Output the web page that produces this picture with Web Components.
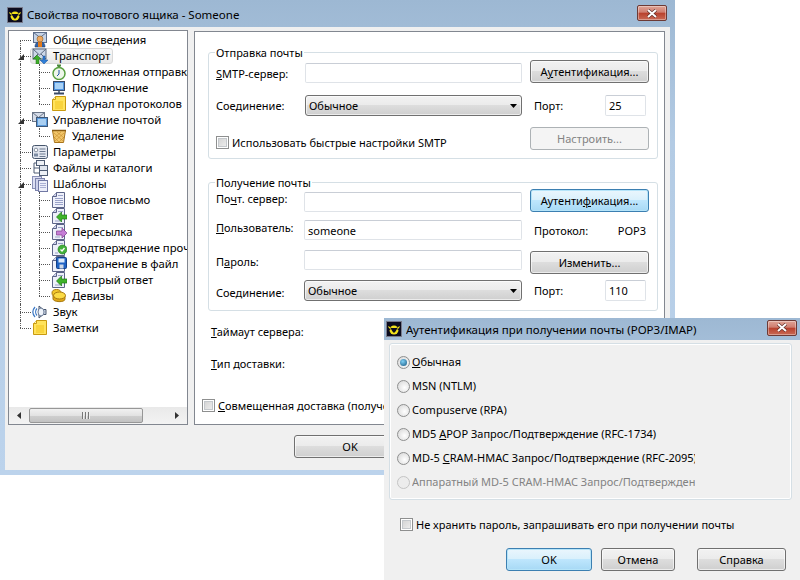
<!DOCTYPE html>
<html>
<head>
<meta charset="utf-8">
<style>
  html, body { margin: 0; height: 100%; background: #fff; overflow: hidden; }
  body { position: relative; font: 11px "Noto Sans", sans-serif; color: #000; }
  u { text-underline-offset: 1px; }
</style>
</head>
<body>

<app-window caption="Свойства почтового ящика - Someone" style="left:0;top:0;width:675px;height:475px">
  <div style="display:flex;align-items:flex-start;gap:6px;padding:3px 4px 0 3px">
    <tree-view style="width:180px;height:395px">
      <tree-row icon="user" first>Общие сведения</tree-row>
      <tree-row icon="transport" open selected>Транспорт</tree-row>
      <tree-row icon="clock" level="1">Отложенная отправка</tree-row>
      <tree-row icon="monitor" level="1">Подключение</tree-row>
      <tree-row icon="note" level="1">Журнал протоколов</tree-row>
      <tree-row icon="mailbox" open>Управление почтой</tree-row>
      <tree-row icon="basket" level="1">Удаление</tree-row>
      <tree-row icon="params">Параметры</tree-row>
      <tree-row icon="files">Файлы и каталоги</tree-row>
      <tree-row icon="docs" open>Шаблоны</tree-row>
      <tree-row icon="doc" level="1">Новое письмо</tree-row>
      <tree-row icon="reply" level="1">Ответ</tree-row>
      <tree-row icon="forward" level="1">Пересылка</tree-row>
      <tree-row icon="confirm" level="1">Подтверждение прочтения</tree-row>
      <tree-row icon="save" level="1">Сохранение в файл</tree-row>
      <tree-row icon="reply" level="1">Быстрый ответ</tree-row>
      <tree-row icon="coins" level="1">Девизы</tree-row>
      <tree-row icon="sound">Звук</tree-row>
      <tree-row icon="note" last>Заметки</tree-row>
    </tree-view>
    <settings-panel style="width:471px;height:394px;margin-top:1px">
      <group-box legend="Отправка почты" style="margin:20px 6px 0 13px;padding:7px 0 8px 7px">
        <form-row gap="0">
          <span slot="label" style="margin-top:3px"><u>S</u>MTP-сервер:</span>
          <win-input slot="field" style="margin-top:3px"></win-input>
          <win-button slot="side" style="width:119px">А<u>у</u>тентификация...</win-button>
        </form-row>
        <form-row gap="12">
          <span slot="label">Соединение:</span>
          <win-select slot="field" value="Обычное"></win-select>
          <port-box slot="side" label="Порт:" value="25"></port-box>
        </form-row>
        <form-row gap="11">
          <win-check slot="label" wide style="align-self:end">Использовать быстрые настройки SMTP</win-check>
          <win-button slot="side" disabled style="width:119px">Настроить...</win-button>
        </form-row>
      </group-box>
      <group-box legend="Получение почты" style="margin:23px 6px 0 13px;padding:6px 0 9px 7px">
        <form-row gap="0" wide>
          <span slot="label" style="margin-top:-4px">По<u>ч</u>т. сервер:</span>
          <win-input slot="field" style="margin-top:3px"></win-input>
          <win-button slot="side" focused style="width:119px">Аутенти<u>ф</u>икация...</win-button>
        </form-row>
        <form-row gap="8" wide>
          <span slot="label" style="margin-top:-6px"><u>П</u>ользователь:</span>
          <win-input slot="field" value="someone"></win-input>
          <info-pair slot="side" label="Протокол:" value="POP3"></info-pair>
        </form-row>
        <form-row gap="10" wide>
          <span slot="label" style="margin-top:-2px">П<u>а</u>роль:</span>
          <win-input slot="field" style="margin-bottom:4px"></win-input>
          <win-button slot="side" style="width:119px;margin-top:1px">Изменить...</win-button>
        </form-row>
        <form-row gap="6" wide>
          <span slot="label" style="margin-top:3px">Соединение:</span>
          <win-select slot="field" value="Обычное"></win-select>
          <port-box slot="side" label="Порт:" value="110"></port-box>
        </form-row>
      </group-box>
      <div style="margin:13px 0 0 16px;white-space:nowrap"><u>Т</u>аймаут сервера:</div>
      <div style="margin:17px 0 0 16px;white-space:nowrap"><u>Т</u>ип доставки:</div>
      <win-check style="margin:27px 0 0 7px"><u>С</u>овмещенная доставка (получение и отправка)</win-check>
    </settings-panel>
  </div>
  <div style="display:flex;padding:10px 0 0 289px">
    <win-button style="width:112px">OK</win-button>
  </div>
</app-window>

<app-window caption="Аутентификация при получении почты (POP3/IMAP)" compact style="left:384px;top:318px;width:416px;height:262px">
  <div style="padding:3px 8px 0 5px">
    <group-box style="height:157px;padding:10px 0 0 7px;box-sizing:border-box">
      <div style="display:flex;flex-direction:column;gap:8px">
        <win-radio checked><u>О</u>бычная</win-radio>
        <win-radio>MSN (NTLM)</win-radio>
        <win-radio>Compuserve (RPA)</win-radio>
        <win-radio>MD5 <u>A</u>POP Запрос/Подтверждение (RFC-1734)</win-radio>
        <win-radio>MD-5 <u>C</u>RAM-HMAC Запрос/Подтверждение (RFC-2095)</win-radio>
        <win-radio disabled>Аппаратный MD-5 CRAM-HMAC Запрос/Подтверждение</win-radio>
      </div>
    </group-box>
    <win-check style="margin:17px 0 0 11px">Не хранить пароль, запрашивать его при получении почты</win-check>
    <div style="display:flex;margin-top:16px;padding-left:117px">
      <win-button focused style="width:86px">OK</win-button>
      <win-button style="width:74px;margin-left:9px">Отмена</win-button>
      <win-button style="width:89px;margin-left:22px">Справка</win-button>
    </div>
  </div>
</app-window>

<script>
const PAGE = `<path d="M5.500.5h8v15h-12v-11z" fill="#eef0fa" stroke="#5c6488"/><path d="M1.500 4.500h4v-4" fill="#cfd3ec" stroke="#5c6488"/>`
const ICONS = {
  user: `<rect x="1.500" y=".5" width="13" height="10" fill="#c6d3e6" stroke="#5e6f8c"/><path d="M1.500.5l6.500 5 6.500-5" fill="none" stroke="#5e6f8c"/><path d="M3 15c0-4 2-5 5-5s5 1 5 5z" fill="#2f62a8" stroke="#233f70" stroke-width=".6"/><path d="M6 15v-5h4v5z" fill="#e27a1c"/><circle cx="8" cy="7" r="3" fill="#eea860" stroke="#8a5a20" stroke-width=".6"/>`,
  transport: `<rect x="1" y="1" width="13" height="10" fill="#cdd8e8" stroke="#5c6a80"/><path d="M1 1l6.500 6 6.500-6M1 11l5-5M14 11l-5-5" fill="none" stroke="#5c6a80"/><path d="M4 16v-5H1l4-4 4 4H7v5z" fill="#3fae2a" stroke="#1f6e14" stroke-width=".5"/><path d="M11 8v4H8l4 4 4-4h-3V8z" fill="#2f7fd8" stroke="#164f96" stroke-width=".5"/>`,
  clock: `<path d="M6 1.500h4M8 2v2" stroke="#4a8a3a" stroke-width="2"/><circle cx="8" cy="9.500" r="6" fill="#eef7ea" stroke="#58a03f" stroke-width="1.500"/><path d="M8 6v4l-2 2" fill="none" stroke="#1f4fa8"/>`,
  monitor: `<rect x="2.500" y="1.500" width="11" height="9" fill="#4f93e0" stroke="#3b4a66"/><rect x="4" y="3" width="8" height="6" fill="#a9d2f6"/><path d="M7 11h2v2H7z" fill="#6a7a90"/><path d="M3 13.500h10" stroke="#3b4a66" stroke-width="2"/>`,
  note: `<path d="M1.500 3.500l3-3h10v14h-13z" fill="#ffe35c" stroke="#c99a10"/><path d="M4 6h8M4 8h8M4 10h8M4 12h8" stroke="#f2c41c"/><path d="M1.500 3.500h3v-3" fill="#fff6c0" stroke="#c99a10"/>`,
  mailbox: `<rect x=".5" y=".5" width="12" height="9" fill="#d5dce8" stroke="#6a7688"/><path d="M.5.500l6 5 6-5" fill="none" stroke="#6a7688"/><rect x="4.500" y="5.500" width="11" height="9" fill="#5b9bdc" stroke="#3f5878"/><rect x="6" y="7" width="8" height="6" fill="#a9cff2"/>`,
  basket: `<path d="M1.500 2.500h13l-2 12h-9z" fill="#f2c66a" stroke="#a8741c"/><path d="M3 5l9 8M6 4l7 6M3 9l5 5M13 5l-9 8M10 4l-7 6M13 9l-5 5" stroke="#c48a2a" stroke-width=".6"/><path d="M1 2.500h14" stroke="#8a5c14" stroke-width="1.500"/>`,
  params: `<rect x=".5" y="1.500" width="15" height="13" rx="2" fill="#e4e8f0" stroke="#47566c"/><circle cx="4" cy="6" r="1.800" fill="#fff" stroke="#47566c" stroke-width=".6"/><rect x="2" y="9.500" width="4" height="3" fill="#7c8ba2"/><path d="M7.500 5h6M7.500 7.500h6M7.500 10h6M7.500 12.500h6" stroke="#6c7a90"/>`,
  files: `<rect x="4.500" y=".5" width="8" height="5" fill="#eef1f6" stroke="#4f5d74"/><rect x="7.500" y="5.500" width="8" height="5" fill="#dfe5ee" stroke="#4f5d74"/><rect x="7.500" y="10.500" width="8" height="5" fill="#eef1f6" stroke="#4f5d74"/><path d="M2 3h3M2 3v10h6M2 8h6" fill="none" stroke="#4f5d74"/>`,
  docs: `<rect x=".5" y=".5" width="9" height="12" fill="#dcdff2" stroke="#8b92b8"/><rect x="3.500" y="2.500" width="9" height="12" fill="#cfd3ec" stroke="#7d84ad"/><rect x="6.500" y="4.500" width="9" height="11" fill="#eceefa" stroke="#7078a4"/><path d="M8 7.500h6M8 9.500h6M8 11.500h6" stroke="#aab0d4"/>`,
  doc: `${PAGE}<path d="M4 6.500h8M4 8.500h8M4 10.500h8M4 12.500h8M7 3.500h5" stroke="#9aa2c8"/>`,
  reply: `${PAGE}<path d="M7 3.500h5M4 13h5" stroke="#9aa2c8"/><path d="M5.500 9l5-5v3H16v4h-5.500v3z" fill="#3fb32a" stroke="#1e7a14" stroke-width=".7"/>`,
  forward: `${PAGE}<path d="M7 3.500h5M4 13h5" stroke="#9aa2c8"/><path d="M16 9l-5-5v3H5.500v4H11v3z" fill="#c67ed6" stroke="#7e3c8e" stroke-width=".7"/>`,
  confirm: `${PAGE}<path d="M7 3.500h5M4 13h3" stroke="#9aa2c8"/><circle cx="11.500" cy="9.500" r="4.500" fill="#42b03a" stroke="#237a1e" stroke-width=".6"/><path d="M9.500 9.500l1.500 1.500 2.500-3" fill="none" stroke="#fff" stroke-width="1.300"/>`,
  save: `${PAGE}<rect x="5.500" y="1.500" width="10" height="11" rx="1" fill="#1f62c4" stroke="#123f88"/><rect x="7.500" y="2.500" width="6" height="4" fill="#dce9fb"/><rect x="8.500" y="8.500" width="4" height="4" fill="#cfd8e6"/>`,
  coins: `<ellipse cx="5.500" cy="5" rx="4.500" ry="3.500" fill="#f3c82c" stroke="#a87a10"/><path d="M2 7v4c0 3 12 4 12 0V7.500" fill="#e0a818" stroke="#a87a10"/><ellipse cx="8.500" cy="7.500" rx="6" ry="3.500" fill="#fbdb45" stroke="#a87a10"/>`,
  sound: `<path d="M11 5.500h3v5h-3L7 14V2z" fill="#c9d4e4" stroke="#48566e"/><ellipse cx="9" cy="8" rx="3" ry="4" fill="#eef3fa" stroke="#6c7c96"/><path d="M5 4.500c-1.800 2-1.800 5 0 7M3 3c-2.600 3-2.600 7 0 10" fill="none" stroke="#3c78c4" stroke-width="1.200"/>`
}

// shared look of the bat logo used in both captions
const LOGO = `<svg width="16" height="16" viewBox="0 0 16 16"><rect width="16" height="16" fill="#0b0b1e"/><rect x=".5" y=".5" width="15" height="15" fill="none" stroke="#e6edf8" stroke-dasharray="1 1"/><ellipse cx="8" cy="9" rx="4.500" ry="4.500" fill="#f2e21a"/><path d="M2 3c1 3 2 4 4 4h4c2 0 3-1 4-4v6c-1 0-2 0-3-1-1 2-2 3-3 4-1-1-2-2-3-4-1 1-2 1-3 1z" fill="#0b0b1e"/><path d="M2 5c.5 2 1.500 3 3 3L4 6zM14 5c-.5 2-1.500 3-3 3l1-2z" fill="#f2e21a"/></svg>`

class AppWindow extends HTMLElement {
  constructor() {
    super()
    this.attachShadow({mode: 'open'})
    const compact = this.hasAttribute('compact')
    this.shadowRoot.innerHTML = `
    <style>
      :host { position: absolute; display: flex; flex-direction: column; box-sizing: border-box;
        padding: ${compact ? '0' : '0 5px 5px'}; background: linear-gradient(#9db8d3, #b3cbe4 30%, #bcd3ec); }
      .bar { display: flex; align-items: center; flex: none; height: ${compact ? 22 : 27}px; padding: ${compact ? '0 0 0 2px' : '2px 0 0 2px'}; box-sizing: border-box; }
      .name { flex: 1; margin-left: 4px; font-size: 11.5px; color: #000; white-space: nowrap; overflow: hidden; }
      .logo { width: 16px; height: 16px; flex: none; }
      .close { flex: none; width: 30px; height: 16px; margin: -3px 3px 0; box-sizing: border-box; border: 1px solid #6d3a35; border-radius: 2px;
        background: linear-gradient(#e0a496, #cf7d6f 45%, #b8402c 50%, #c96a55); display: flex; align-items: center; justify-content: center; box-shadow: inset 0 0 0 1px rgba(255,255,255,.35); }
      .body { flex: 1; background: #f0f0f0; min-height: 0; overflow: hidden; }
    </style>
    <div class="bar">
      <span class="logo">${LOGO}</span>
      <span class="name"></span>
      <span class="close"><svg width="12" height="9" viewBox="0 0 12 9"><path d="M2 1l8 7M10 1L2 8" stroke="#5a2a24" stroke-width="3.200"/><path d="M2 1l8 7M10 1L2 8" stroke="#fff" stroke-width="2"/></svg></span>
    </div>
    <div class="body"><slot></slot></div>`
    this.shadowRoot.querySelector('.name').textContent = this.getAttribute('caption')
  }
}

class TreeView extends HTMLElement {
  constructor() {
    super()
    this.attachShadow({mode: 'open'})
    this.shadowRoot.innerHTML = `
    <style>
      :host { display: flex; flex-direction: column; flex: none; box-sizing: border-box; background: #fff; border: 1px solid #828790; font-size: 11.300px; }
      .rows { flex: 1; padding-top: 1px; overflow: hidden; white-space: nowrap; }
      .scroll { flex: none; height: 17px; display: flex; align-items: center; background: linear-gradient(#e9e9e9, #f3f3f3); }
      .arrow { width: 20px; flex: none; display: flex; justify-content: center; }
      .track { flex: 1; }
      .thumb { width: 114px; height: 15px; box-sizing: border-box; border: 1px solid #979797; border-radius: 2px;
        background: linear-gradient(#f1f1f1, #e2e2e2 50%, #cfcfcf 52%, #c2c2c2); display: flex; align-items: center; justify-content: center; gap: 1px; }
      .thumb i { width: 1px; height: 7px; background: #777; box-shadow: 1px 0 0 #eee; margin-right: 1px; }
    </style>
    <div class="rows"><slot></slot></div>
    <div class="scroll">
      <span class="arrow"><svg width="4" height="7"><path d="M4 0v7L0 3.500z" fill="#333"/></svg></span>
      <span class="thumb"><i></i><i></i><i></i></span>
      <span class="track"></span>
      <span class="arrow"><svg width="4" height="7"><path d="M0 0v7l4-3.500z" fill="#333"/></svg></span>
    </div>`
  }
}

class TreeRow extends HTMLElement {
  constructor() {
    super()
    this.attachShadow({mode: 'open'})
    const level = Number(this.getAttribute('level') ?? 0)
    const first = this.hasAttribute('first')
    const last = this.hasAttribute('last')
    const open = this.hasAttribute('open')
    const selected = this.hasAttribute('selected')
    this.shadowRoot.innerHTML = `
    <style>
      :host { display: flex; height: 16px; align-items: center; position: relative; }
      .guide { position: absolute; left: 11px; top: ${first ? 8 : 0}px; height: ${first || last ? 8 : 16}px; border-left: 1px dotted #555; }
      .tick { position: absolute; left: ${level ? 30 : 11}px; top: 8px; width: 11px; border-top: 1px dotted #555; }
      .sub { position: absolute; left: 30px; top: 0; height: 16px; border-left: 1px dotted #555; }
      .exp { position: absolute; left: 9px; top: 6px; width: 0; height: 0; border-style: solid; border-width: 0 0 6px 6px; border-color: transparent transparent #333 transparent; }
      .icon { position: absolute; left: ${level ? 42 : 23}px; top: 0; width: 16px; height: 16px; }
      .text { margin-left: ${level ? 63 : 44}px; margin-top: -1px; }
      .on { margin-left: 21px; padding: 0 2px 0 22px; height: 16px; line-height: 13px; box-sizing: border-box;
        border: 1px solid #d9d9d9; border-radius: 3px; background: linear-gradient(#fafafa, #e8e8e8); }
    </style>
    <span class="guide"></span>
    ${level ? '<span class="sub"></span>' : ''}
    <span class="tick"></span>
    ${open ? '<span class="exp"></span>' : ''}
    <span class="${selected ? 'on' : 'text'}"><slot></slot></span>
    <svg class="icon" viewBox="0 0 16 16">${ICONS[this.getAttribute('icon')]}</svg>`
  }

  connectedCallback() {
    // the sub guide stops at the last child of a branch
    const next = this.nextElementSibling
    const sub = this.shadowRoot.querySelector('.sub')
    if (sub && (!next || !next.hasAttribute('level'))) sub.style.height = '8px'
  }
}

class SettingsPanel extends HTMLElement {
  constructor() {
    super()
    this.attachShadow({mode: 'open'})
    this.shadowRoot.innerHTML = `
    <style>
      :host { display: flow-root; flex: none; box-sizing: border-box; background: #fff; border: 1px solid #828790; overflow: hidden; }
    </style>
    <slot></slot>`
  }
}

class GroupBox extends HTMLElement {
  constructor() {
    super()
    this.attachShadow({mode: 'open'})
    const legend = this.getAttribute('legend')
    this.shadowRoot.innerHTML = `
    <style>
      :host { display: block; position: relative; border: 1px solid #d5dfe5; border-radius: 3px; box-shadow: inset 0 0 0 1px #fff; }
      .legend { position: absolute; left: 6px; top: -7px; padding: 0 1px; background: #fff; line-height: 13px; white-space: nowrap; }
    </style>
    ${legend ? `<span class="legend">${legend}</span>` : ''}
    <slot></slot>`
  }
}

class FormRow extends HTMLElement {
  constructor() {
    super()
    this.attachShadow({mode: 'open'})
    const label = this.hasAttribute('wide') ? 88 : 89
    this.shadowRoot.innerHTML = `
    <style>
      :host { display: grid; grid-template-columns: ${label}px ${306 - label}px 127px; align-items: center; margin-top: ${this.getAttribute('gap') ?? 0}px; }
      ::slotted(win-check) { grid-column: 1 / 3; }
      .side { grid-column: 3; margin-left: 8px; display: block; }
    </style>
    <slot name="label"></slot>
    <slot name="field"></slot>
    <span class="side"><slot name="side"></slot></span>`
  }
}

class WinButton extends HTMLElement {
  constructor() {
    super()
    this.attachShadow({mode: 'open'})
    this.shadowRoot.innerHTML = `
    <style>
      :host { display: flex; align-items: center; justify-content: center; height: 23px; box-sizing: border-box; flex: none; white-space: nowrap;
        border: 1px solid #707070; border-radius: 3px; box-shadow: inset 0 0 0 1px rgba(255,255,255,.6);
        background: linear-gradient(#f2f2f2, #ebebeb 48%, #dddddd 50%, #cfcfcf); }
      :host([disabled]) { border-color: #adb2b5; background: #f4f4f4; color: #838383; box-shadow: none; }
      :host([focused]) { border-color: #3c7fb1; box-shadow: inset 0 0 0 1px #b5e4f9; background: linear-gradient(#eaf6fd, #d9f0fc 48%, #bee6fd 50%, #a7d9f5); }
    </style>
    <slot></slot>`
  }
}

class WinInput extends HTMLElement {
  constructor() {
    super()
    this.attachShadow({mode: 'open'})
    this.shadowRoot.innerHTML = `
    <style>
      :host { display: flex; align-items: center; height: 20px; box-sizing: border-box; padding-left: 3px; background: #fff; border: 1px solid #dfe3e8; border-top-color: #c9ced6; border-radius: 2px; }
    </style>
    <span></span>`
    this.shadowRoot.querySelector('span').textContent = this.getAttribute('value') ?? ''
  }
}

class WinSelect extends HTMLElement {
  constructor() {
    super()
    this.attachShadow({mode: 'open'})
    this.shadowRoot.innerHTML = `
    <style>
      :host { display: flex; align-items: center; justify-content: space-between; height: 21px; box-sizing: border-box; padding: 0 4px 0 3px;
        border: 1px solid #707070; border-radius: 3px; box-shadow: inset 0 0 0 1px rgba(255,255,255,.6);
        background: linear-gradient(#f2f2f2, #ebebeb 48%, #dddddd 50%, #cfcfcf); }
      svg { flex: none; }
    </style>
    <span></span>
    <svg width="7" height="4"><path d="M0 0h7L3.500 4z" fill="#000"/></svg>`
    this.shadowRoot.querySelector('span').textContent = this.getAttribute('value') ?? ''
  }
}

class PortBox extends HTMLElement {
  constructor() {
    super()
    this.attachShadow({mode: 'open'})
    this.shadowRoot.innerHTML = `
    <style>
      :host { display: flex; align-items: center; justify-content: space-between; padding: 0 3px 0 4px; }
      .value { width: 41px; height: 21px; box-sizing: border-box; display: flex; align-items: center; padding-left: 3px; border: 1px solid #dfe3e8; border-top-color: #c9ced6; border-radius: 2px; }
    </style>
    <span class="label"></span><span class="value"></span>`
    this.shadowRoot.querySelector('.label').textContent = this.getAttribute('label')
    this.shadowRoot.querySelector('.value').textContent = this.getAttribute('value')
  }
}

class InfoPair extends HTMLElement {
  constructor() {
    super()
    this.attachShadow({mode: 'open'})
    this.shadowRoot.innerHTML = `
    <style>
      :host { display: flex; justify-content: space-between; padding: 0 3px 0 4px; }
    </style>
    <span class="label"></span><span class="value"></span>`
    this.shadowRoot.querySelector('.label').textContent = this.getAttribute('label')
    this.shadowRoot.querySelector('.value').textContent = this.getAttribute('value')
  }
}

class WinCheck extends HTMLElement {
  constructor() {
    super()
    this.attachShadow({mode: 'open'})
    this.shadowRoot.innerHTML = `
    <style>
      :host { display: flex; align-items: center; gap: 3px; white-space: nowrap; }
      .box { flex: none; width: 13px; height: 13px; box-sizing: border-box; border: 1px solid #8e8f8f; background: linear-gradient(135deg, #cfcfcf, #f2f2f2); box-shadow: inset 0 0 0 1px #fff, inset 0 0 0 2px #c4c8cc; }
    </style>
    <span class="box"></span><span><slot></slot></span>`
  }
}

class WinRadio extends HTMLElement {
  constructor() {
    super()
    this.attachShadow({mode: 'open'})
    this.shadowRoot.innerHTML = `
    <style>
      :host { display: flex; align-items: center; gap: 2px; height: 16px; white-space: nowrap; }
      :host([disabled]) { color: #838383; }
      .dot { flex: none; width: 13px; height: 13px; box-sizing: border-box; border: 1px solid #8e8f8f; border-radius: 50%;
        background: radial-gradient(circle at 60% 60%, #fff, #d4d4d4); display: flex; align-items: center; justify-content: center; }
      :host([disabled]) .dot { border-color: #c4c4c4; background: #ececec; }
      :host([checked]) .dot::after { content: ""; width: 7px; height: 7px; border-radius: 50%; background: radial-gradient(circle at 40% 35%, #7fd0f5, #16567f); }
      .text { width: 283px; overflow: hidden; margin-top: -1px; }
    </style>
    <span class="dot"></span><span class="text"><slot></slot></span>`
  }
}

customElements.define('app-window', AppWindow)
customElements.define('tree-view', TreeView)
customElements.define('tree-row', TreeRow)
customElements.define('settings-panel', SettingsPanel)
customElements.define('group-box', GroupBox)
customElements.define('form-row', FormRow)
customElements.define('win-button', WinButton)
customElements.define('win-input', WinInput)
customElements.define('win-select', WinSelect)
customElements.define('port-box', PortBox)
customElements.define('info-pair', InfoPair)
customElements.define('win-check', WinCheck)
customElements.define('win-radio', WinRadio)
</script>
</body>
</html>
